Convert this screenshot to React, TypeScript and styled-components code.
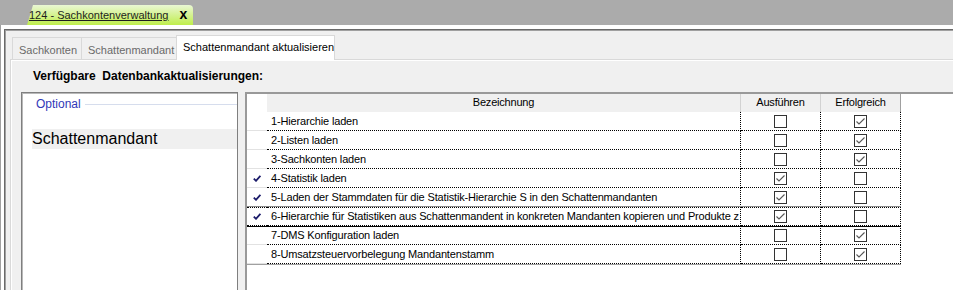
import React from 'react';
import styled, { createGlobalStyle } from 'styled-components';

const GlobalStyle = createGlobalStyle`
  html, body {
    margin: 0;
    padding: 0;
    overflow: hidden;
  }
  body {
    background: #ababab;
    font-family: 'Liberation Sans', Arial, sans-serif;
    color: #000;
  }
`;

const Window = styled.div`
  width: 990px;
  height: 290px;
  display: flex;
  flex-direction: column;
`;

const TopBar = styled.div`
  height: 25px;
  flex: none;
  display: flex;
  align-items: flex-end;
  padding-left: 27px;
  background: #ababab;
`;

const DocTab = styled.div`
  position: relative;
  isolation: isolate;
  width: 166px;
  height: 20px;
  box-sizing: border-box;
  display: flex;
  align-items: center;
  gap: 11px;
  padding-left: 2px;

  &::before {
    content: '';
    position: absolute;
    inset: 0;
    z-index: -1;
    background: linear-gradient(#eaf7d4, #bfee4c);
    clip-path: polygon(6px 0, 100% 0, 100% 100%, 0 100%);
    border-top-right-radius: 4px;
  }
`;

const DocTitle = styled.span`
  font-size: 11px;
  color: #1e1e1e;
  text-decoration: underline;
`;

const DocClose = styled.span`
  font-size: 14px;
  font-weight: bold;
  line-height: 14px;
  margin-top: -2px;
`;

const OuterFrame = styled.div`
  flex: 1;
  display: flex;
  padding: 4px 0 0 3px;
  background: #fff;
  border-left: 1px solid #a0a0a0;
`;

const InnerFrame = styled.div`
  flex: 1;
  display: flex;
  flex-direction: column;
  padding: 5px 0 0 5px;
  background: #f0f0f0;
  border-top: 1px solid #696969;
  border-left: 1px solid #696969;
  box-shadow: inset 1px 1px 0 #a0a0a0;
`;

const TabStrip = styled.div`
  height: 24px;
  flex: none;
  display: flex;
  align-items: flex-end;
  padding-left: 2px;
`;

const Tab = styled.div<{ $active?: boolean; $w: number }>`
  position: relative;
  z-index: ${(p) => (p.$active ? 1 : 0)};
  width: ${(p) => p.$w}px;
  height: ${(p) => (p.$active ? 25 : 22)}px;
  margin-bottom: ${(p) => (p.$active ? -1 : 0)}px;
  margin-left: -1px;
  box-sizing: border-box;
  padding: ${(p) => (p.$active ? '5px 0 0 6px' : '6px 0 0 6px')};
  font-size: 11px;
  line-height: 13px;
  white-space: nowrap;
  color: ${(p) => (p.$active ? '#000' : '#6a6a6a')};
  background: ${(p) => (p.$active ? '#fff' : '#f0f0f0')};
  border: 1px solid #d9d9d9;
  border-bottom: none;

  &:first-child {
    margin-left: 0;
  }
`;

const TabPage = styled.div`
  flex: 1;
  display: flex;
  flex-direction: column;
  padding-top: 9px;
  border-top: 1px solid #d9d9d9;
  border-left: 1px solid #d9d9d9;
  box-shadow: inset 1px 1px 0 #fff;
`;

const Heading = styled.div`
  margin-left: 22px;
  font-size: 12px;
  font-weight: bold;
  line-height: 14px;
  white-space: pre;
`;

const Panels = styled.div`
  flex: 1;
  display: flex;
  margin-top: 9px;
  padding-left: 10px;
`;

const ListBox = styled.div`
  width: 217px;
  flex: none;
  box-sizing: border-box;
  padding: 2px 0 0 10px;
  background: #fff;
  border: 1px solid #7f7f7f;
  border-bottom: none;
  box-shadow: inset 1px 1px 0 #b8b8b8;
`;

const GroupHeader = styled.div`
  display: flex;
  align-items: center;
  gap: 4px;
  height: 18px;
  padding-left: 4px;
  font-size: 12px;
  color: #3138b8;

  &::after {
    content: '';
    flex: 1;
    height: 1px;
    background: #d6dded;
  }
`;

const ListItem = styled.div`
  margin-top: 16px;
  height: 20px;
  font-size: 16px;
  line-height: 20px;
  background: #f0f0f0;
`;

const Grid = styled.div`
  flex: 1;
  margin-left: 7px;
  background: #fff;
  border-top: 2px solid #999;
  border-left: 2px solid #999;
`;

const Row = styled.div`
  display: flex;
`;

const HeaderCell = styled.div<{ $w: number; $last?: boolean }>`
  width: ${(p) => p.$w}px;
  height: 18px;
  box-sizing: border-box;
  font-size: 11px;
  letter-spacing: -0.2px;
  line-height: 17px;
  text-align: center;
  background: #f0f0f0;
  border-right: 1px solid ${(p) => (p.$last ? '#a0a0a0' : '#d2d2d2')};
`;

const Corner = styled.div`
  width: 20px;
  height: 18px;
  background: #fff;
`;

const RowsWrap = styled.div`
  width: 654px;
  border-bottom: 1px solid #a0a0a0;
`;

const RowHead = styled.div<{ $current?: boolean }>`
  width: 20px;
  height: 19px;
  box-sizing: border-box;
  display: flex;
  align-items: center;
  padding-left: 6px;
  border-bottom: 1px solid ${(p) => (p.$current ? '#000' : '#e2e2e2')};
  ${(p) =>
    p.$current &&
    `
    border-top: 1px dotted #000;
    border-bottom-style: dotted;
    box-shadow: 0 -1px 0 #8a8a8a, 0 1px 0 #000;
  `}
`;

const Cell = styled.div<{ $w: number; $current?: boolean; $center?: boolean }>`
  width: ${(p) => p.$w}px;
  height: 19px;
  box-sizing: border-box;
  display: flex;
  align-items: ${(p) => (p.$center ? 'center' : 'flex-start')};
  justify-content: ${(p) => (p.$center ? 'center' : 'flex-start')};
  padding-left: ${(p) => (p.$center ? 0 : 4)}px;
  overflow: hidden;
  white-space: nowrap;
  font-size: 11px;
  letter-spacing: -0.16px;
  line-height: 18px;
  border-right: 1px dotted #000;
  border-bottom: 1px dotted #000;
  ${(p) =>
    p.$current &&
    `
    border-top: 1px dotted #000;
    line-height: 17px;
    box-shadow: 0 -1px 0 #8a8a8a, 0 1px 0 #000;
  `}
`;

const Box = styled.div`
  width: 13px;
  height: 13px;
  box-sizing: border-box;
  background: #fff;
  border: 1px solid #333;
  display: flex;
  align-items: center;
  justify-content: center;
`;

const Check = ({ on }: { on: boolean }) => (
  <Box>
    {on && (
      <svg width="11" height="11" viewBox="0 0 11 11">
        <path d="M1.5 5.5 L4 8 L9.5 2.5" fill="none" stroke="#555" strokeWidth="1.1" />
      </svg>
    )}
  </Box>
);

const Mark = () => (
  <svg width="8" height="7" viewBox="0 0 8 7">
    <path d="M0.8 3.6 L3 5.8 L7.4 0.8" fill="none" stroke="#1b1b6a" strokeWidth="1.8" />
  </svg>
);

const rows = [
  { label: '1-Hierarchie laden', run: false, ok: true },
  { label: '2-Listen laden', run: false, ok: true },
  { label: '3-Sachkonten laden', run: false, ok: true },
  { label: '4-Statistik laden', run: true, ok: false, marked: true },
  {
    label: '5-Laden der Stammdaten für die Statistik-Hierarchie S in den Schattenmandanten',
    run: true,
    ok: false,
    marked: true,
  },
  {
    label:
      '6-Hierarchie für Statistiken aus Schattenmandent in konkreten Mandanten kopieren und Produkte z',
    run: true,
    ok: false,
    marked: true,
    current: true,
  },
  { label: '7-DMS Konfiguration laden', run: false, ok: true },
  { label: '8-Umsatzsteuervorbelegung Mandantenstamm', run: false, ok: true },
];

const App: React.FC = () => {
  return (
    <Window>
      <GlobalStyle />
      <TopBar>
        <DocTab>
          <DocTitle>124 - Sachkontenverwaltung</DocTitle>
          <DocClose>x</DocClose>
        </DocTab>
      </TopBar>
      <OuterFrame>
        <InnerFrame>
          <TabStrip>
            <Tab $w={70}>Sachkonten</Tab>
            <Tab $w={96}>Schattenmandant</Tab>
            <Tab $w={159} $active>
              Schattenmandant aktualisieren
            </Tab>
          </TabStrip>
          <TabPage>
            <Heading>Verfügbare  Datenbankaktualisierungen:</Heading>
            <Panels>
              <ListBox>
                <GroupHeader>Optional</GroupHeader>
                <ListItem>Schattenmandant</ListItem>
              </ListBox>
              <Grid>
                <Row>
                  <Corner />
                  <HeaderCell $w={474}>Bezeichnung</HeaderCell>
                  <HeaderCell $w={80}>Ausführen</HeaderCell>
                  <HeaderCell $w={80} $last>
                    Erfolgreich
                  </HeaderCell>
                </Row>
                <RowsWrap>
                  {rows.map((r) => (
                    <Row key={r.label}>
                      <RowHead $current={r.current}>{r.marked && <Mark />}</RowHead>
                      <Cell $w={474} $current={r.current}>
                        {r.label}
                      </Cell>
                      <Cell $w={80} $current={r.current} $center>
                        <Check on={r.run} />
                      </Cell>
                      <Cell $w={80} $current={r.current} $center>
                        <Check on={r.ok} />
                      </Cell>
                    </Row>
                  ))}
                </RowsWrap>
              </Grid>
            </Panels>
          </TabPage>
        </InnerFrame>
      </OuterFrame>
    </Window>
  );
};

export default App;
